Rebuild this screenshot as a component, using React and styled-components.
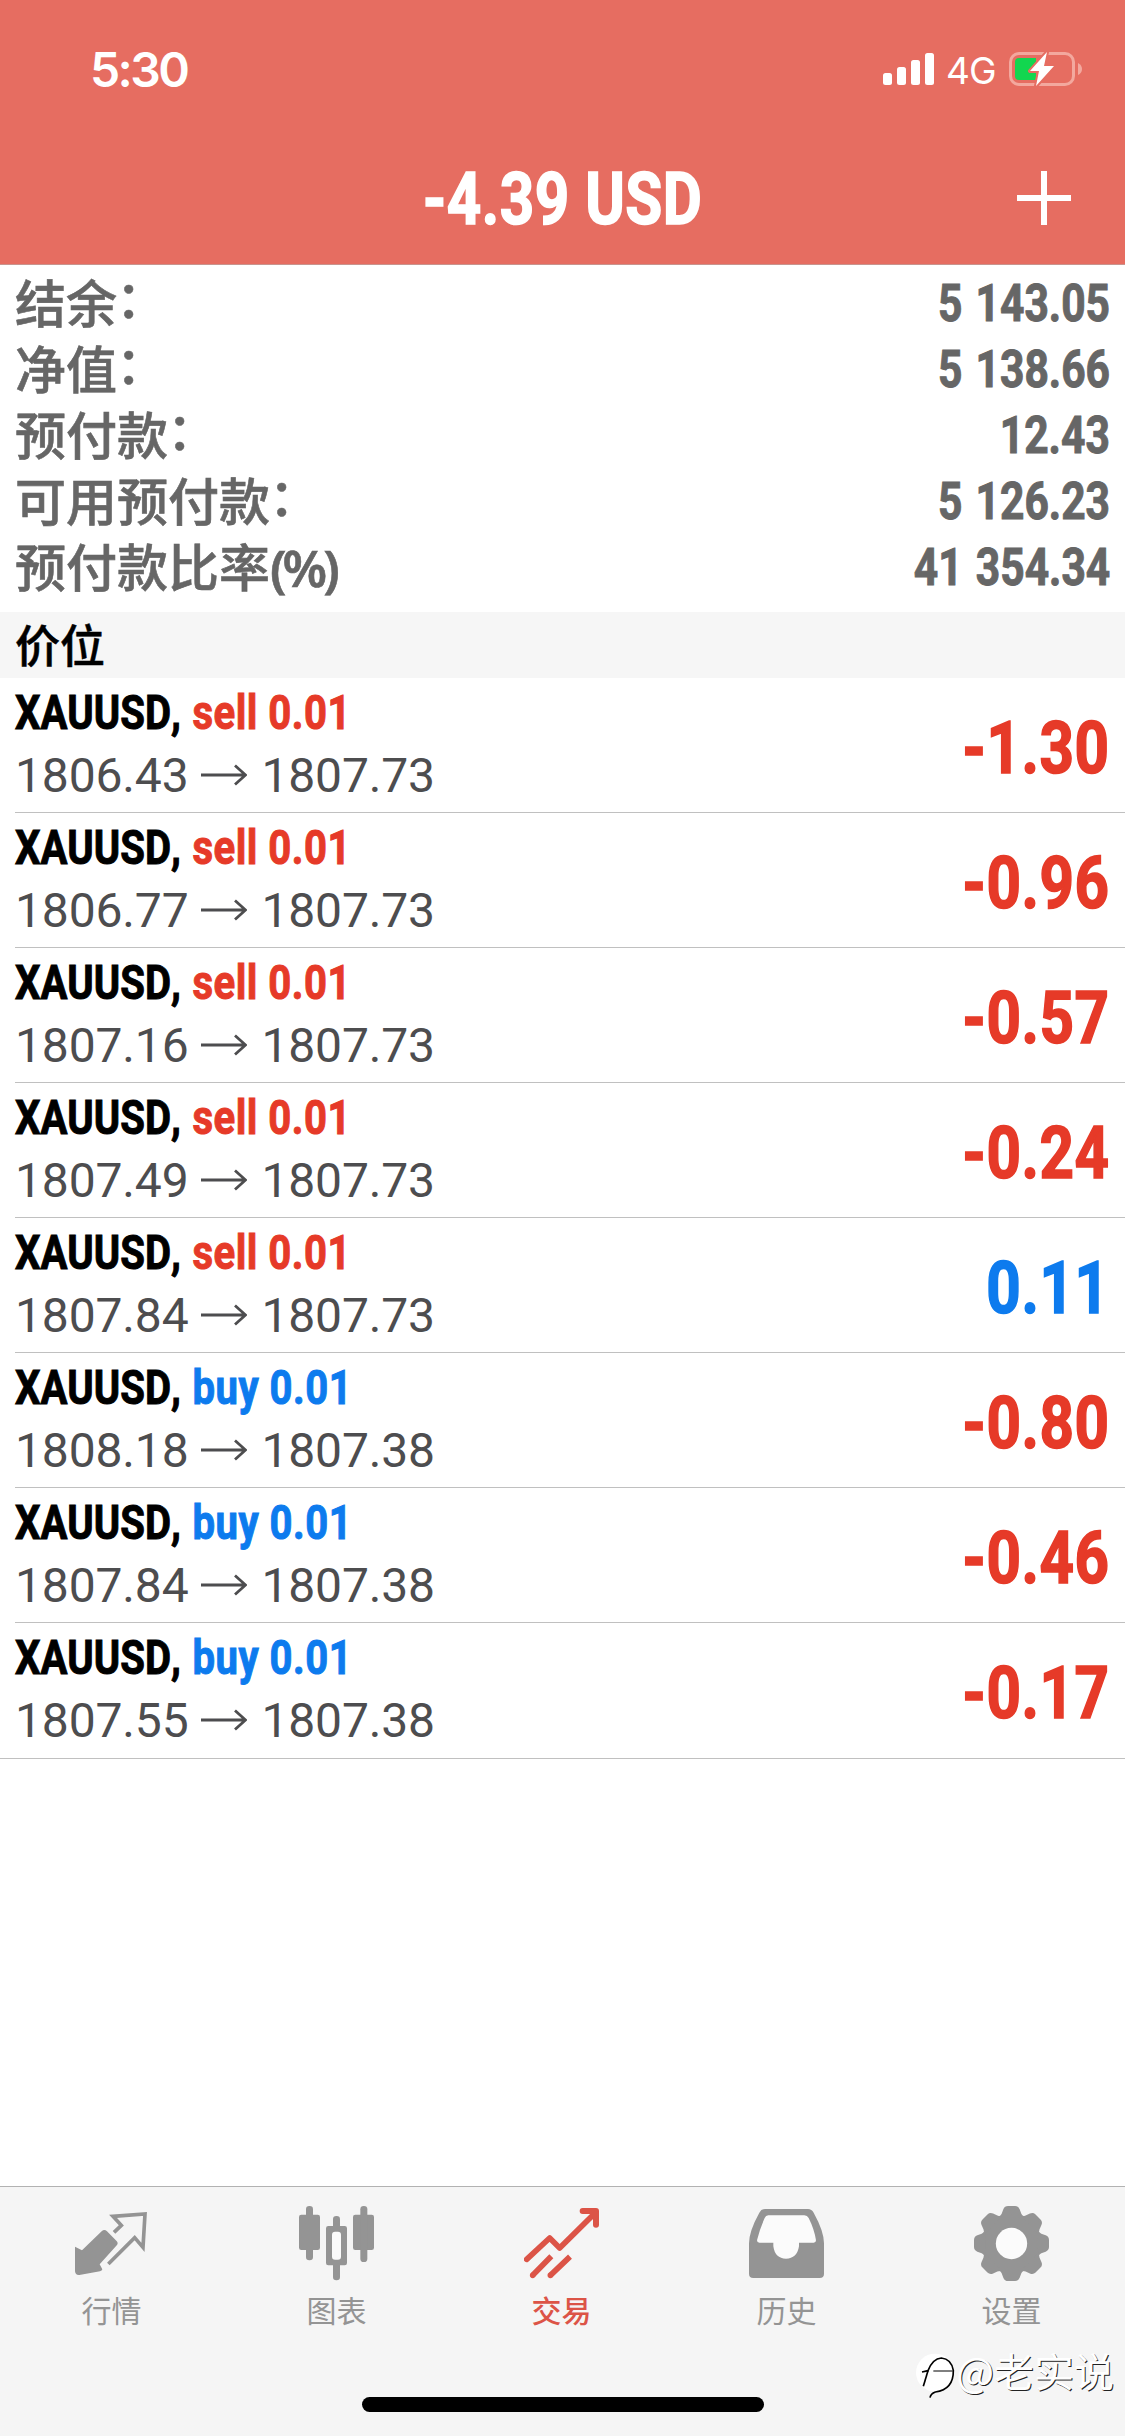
import React from 'react';
import styled, { createGlobalStyle } from 'styled-components'

const red = '#e63a28'
const blue = '#0d7bee'
const cjk = `'Noto Sans CJK SC', sans-serif`

const account = [
    { label: '结余', colon: true, value: '5 143.05' },
    { label: '净值', colon: true, value: '5 138.66' },
    { label: '预付款', colon: true, value: '12.43' },
    { label: '可用预付款', colon: true, value: '5 126.23' },
    { label: '预付款比率', unit: '(%)', value: '41 354.34' },
]

const positions = [
    { id: 1, side: 'sell', open: '1806.43', current: '1807.73', profit: '-1.30' },
    { id: 2, side: 'sell', open: '1806.77', current: '1807.73', profit: '-0.96' },
    { id: 3, side: 'sell', open: '1807.16', current: '1807.73', profit: '-0.57' },
    { id: 4, side: 'sell', open: '1807.49', current: '1807.73', profit: '-0.24' },
    { id: 5, side: 'sell', open: '1807.84', current: '1807.73', profit: '0.11' },
    { id: 6, side: 'buy', open: '1808.18', current: '1807.38', profit: '-0.80' },
    { id: 7, side: 'buy', open: '1807.84', current: '1807.38', profit: '-0.46' },
    { id: 8, side: 'buy', open: '1807.55', current: '1807.38', profit: '-0.17' },
]

const QuotesIcon = () => (
    <svg width="75" height="75" viewBox="0 0 225 225" fill="currentColor">
        <path d="M3 122 L24 133 L83 76 Q91 68 99 76 L127 104 Q135 112 127 119 L77 175 L85 190 Q84 195 78 196 L16 207 Q4 208 3 196 Z" />
        <path d="M120 79 L142 58 L117 31 L213 24 L207 124 L182 95 L103 174" fill="none" stroke="currentColor" strokeWidth="11" />
    </svg>
)

const ChartIcon = () => (
    <svg width="75" height="75" viewBox="0 0 225 225" fill="currentColor">
        <rect x="0" y="26" width="63" height="106" rx="7" />
        <rect x="21" y="0" width="21" height="163" rx="10" />
        <rect x="162" y="26" width="63" height="106" rx="7" />
        <rect x="184" y="0" width="21" height="168" rx="10" />
        <rect x="102" y="30" width="21" height="193" rx="10" />
        <rect x="81" y="60" width="63" height="118" rx="7" />
        <rect x="99" y="77" width="27" height="84" rx="9" fill="#fbfbfb" />
    </svg>
)

const TradeIcon = () => (
    <svg width="75" height="75" viewBox="0 0 225 225" fill="none" stroke="currentColor" strokeWidth="17" strokeLinejoin="round">
        <path d="M8 160 L77 96 L107 126 L214 20" strokeLinecap="round" />
        <path d="M176 15 H216 V56" strokeWidth="18" strokeLinecap="round" />
        <path d="M26 208 L82 151 M79 208 L138 152" />
        <path d="M26 208 h.1 M79 208 h.1" strokeLinecap="round" />
    </svg>
)

const HistoryIcon = () => (
    <svg width="75" height="75" viewBox="0 0 225 225" fill="currentColor">
        <path d="M48 9 H177 Q188 9 194 20 Q225 76 225 112 V203 Q225 216 212 216 H13 Q0 216 0 203 V112 Q0 76 31 20 Q37 9 48 9 Z" />
        <path d="M58 28 H166 Q175 28 179 36 Q196 70 201 103 Q201 110 194 110 H150 V121 Q144 158 111 158 Q78 158 73 121 V110 H31 Q24 110 24 103 Q32 70 47 36 Q50 28 58 28 Z" fill="#fbfbfb" />
    </svg>
)

const SettingsIcon = () => (
    <svg width="75" height="75" viewBox="0 0 225 225" fill="currentColor">
        <circle cx="112.5" cy="112.5" r="90" />
        {[0, 45, 90, 135, 180, 225, 270, 315].map(angle => (
            <path
                key={angle}
                d="M72 35 Q80 30 83 23 L88 10 Q92 0 102 0 H123 Q133 0 137 10 L142 23 Q145 30 153 35 Z"
                transform={`rotate(${angle} 112.5 112.5)`}
            />
        ))}
        <circle cx="112.5" cy="112.5" r="47" fill="#fbfbfb" />
    </svg>
)

const tabs = [
    { name: '行情', Icon: QuotesIcon },
    { name: '图表', Icon: ChartIcon },
    { name: '交易', Icon: TradeIcon, active: true },
    { name: '历史', Icon: HistoryIcon },
    { name: '设置', Icon: SettingsIcon },
]

const Signal = () => (
    <svg width="51" height="32" viewBox="0 0 51 32" fill="#fff">
        <rect x="0" y="20" width="9" height="12" rx="2.5" />
        <rect x="14" y="14" width="9" height="18" rx="2.5" />
        <rect x="28" y="7" width="9" height="25" rx="2.5" />
        <rect x="42" y="0" width="9" height="32" rx="2.5" />
    </svg>
)

const Battery = () => (
    <svg width="74" height="36" viewBox="0 0 74 36">
        <rect x="1.5" y="2.5" width="63" height="31" rx="8.5" fill="none" stroke="#f3a89e" strokeWidth="3" />
        <path d="M69 12 Q73 14 73 18 Q73 22 69 24 Z" fill="#f3a89e" />
        <path d="M10 7 H27 V29 H10 Q6 29 6 25 V11 Q6 7 10 7 Z" fill="#12d64f" />
        <path d="M38 1 L21 20 H30 L27 35 L45 15 H35 Z" fill="#fff" stroke="#e66d61" strokeWidth="4" paintOrder="stroke" strokeLinejoin="round" />
    </svg>
)

const Arrow = () => (
    <svg width="46" height="22" viewBox="0 0 46 22" fill="none" stroke="#4d4d4f" strokeWidth="2.8">
        <path d="M0 11 H44 M34 1.5 L44.5 11 L34 20.5" />
    </svg>
)

const App = () => (
    <Screen>
        <GlobalStyle />
        <Header>
            <StatusBar>
                <Time>5:30</Time>
                <StatusIcons>
                    <Signal />
                    <Network>4G</Network>
                    <Battery />
                </StatusIcons>
            </StatusBar>
            <TitleBar>
                <Title>-4.39 USD</Title>
                <AddButton aria-label="add">
                    <svg width="54" height="54" viewBox="0 0 54 54" stroke="#fff" strokeWidth="6">
                        <path d="M0 27 H54 M27 0 V54" />
                    </svg>
                </AddButton>
            </TitleBar>
        </Header>
        <Account>
            {account.map(row => (
                <AccountRow key={row.label}>
                    <AccountLabel>
                        {row.label}
                        {row.colon && <Colon>：</Colon>}
                        {row.unit && <Unit>{row.unit}</Unit>}
                    </AccountLabel>
                    <AccountValue>{row.value}</AccountValue>
                </AccountRow>
            ))}
        </Account>
        <SectionTitle>价位</SectionTitle>
        <Positions>
            {positions.map(item => (
                <Position key={item.id}>
                    <div>
                        <Symbol>XAUUSD, <Side $side={item.side}>{item.side} 0.01</Side></Symbol>
                        <Prices>
                            <span>{item.open}</span>
                            <Arrow />
                            <span>{item.current}</span>
                        </Prices>
                    </div>
                    <Profit $loss={item.profit.startsWith('-')}>{item.profit}</Profit>
                </Position>
            ))}
        </Positions>
        <TabBar>
            <Tabs>
                {tabs.map(({ name, Icon, active }) => (
                    <Tab key={name} $active={active}>
                        <Icon />
                        <TabName $active={active}>{name}</TabName>
                    </Tab>
                ))}
            </Tabs>
            <HomeIndicator />
        </TabBar>
        <Watermark>
            <svg width="40" height="47" viewBox="50 35 120 141" fill="none" stroke="#000">
                <circle cx="107" cy="97" r="57" fill="#fff" stroke="none" />
                <path d="M92 172 Q94 160 108 155 Q163 148 162 90 Q156 56 126 53 Q100 55 86 91 L68 95" strokeWidth="5" />
                <path d="M86 91 L72 138" strokeWidth="5" />
                <path d="M102 92 H160" strokeWidth="3" />
            </svg>
            <span>@老实说</span>
        </Watermark>
    </Screen>
)

export default App

const GlobalStyle = createGlobalStyle`
    body {
        margin: 0;
        background: #fff;
    }
    * {
        box-sizing: border-box;
    }
    svg {
        display: block;
        flex: none;
    }
`

const Screen = styled.div`
    position: relative;
    display: flex;
    flex-direction: column;
    width: 1125px;
    height: 2436px;
    overflow: hidden;
    background: #fff;
    font-family: Roboto, ${cjk};
`

const Header = styled.header`
    height: 265px;
    background: #e66d61;
    border-bottom: 1px solid #c9948e;
    color: #fff;
`

const StatusBar = styled.div`
    display: flex;
    justify-content: space-between;
    height: 132px;
    padding: 0 42px 0 90px;
`

const Time = styled.div`
    padding-top: 40px;
    font: 600 48px/60px Inter, sans-serif;
    letter-spacing: -2.6px;
`

const StatusIcons = styled.div`
    display: flex;
    align-items: center;
    height: 36px;
    margin-top: 51px;
`

const Network = styled.span`
    width: 50px;
    padding-top: 3px;
    margin: 0 13px 0 12px;
    font: 400 37px/36px Inter, sans-serif;
    letter-spacing: -0.8px;
`

const TitleBar = styled.div`
    display: grid;
    grid-template-columns: 1fr auto 1fr;
    align-items: center;
    height: 132px;
    padding-right: 54px;
`

// the narrow bold face is the regular bold squeezed horizontally
const Condensed = styled.span`
    display: block;
    white-space: pre;
    font-weight: 700;
    font-kerning: none;
    transform: scaleX(0.835);
    -webkit-text-stroke: 1px currentColor;
`

const Title = styled(Condensed)`
    grid-column: 2;
    margin-left: 54px;
    padding-top: 3px;
    font-size: 72px;
    line-height: 80px;
    letter-spacing: 0.6px;
    -webkit-text-stroke-width: 1.6px;
`

const AddButton = styled.button`
    justify-self: end;
    padding: 0;
    border: none;
    background: transparent;
`

const Account = styled.section`
    padding: 5px 15px 12px;
    color: #666;
`

const AccountRow = styled.div`
    display: flex;
    justify-content: space-between;
    height: 66px;
`

const AccountLabel = styled.span`
    margin-top: -2px;
    font: 500 51px/66px ${cjk};
    -webkit-text-stroke: 0.6px currentColor;
`

const Colon = styled.span`
    position: relative;
    top: -5px;
    left: -1px;
`

const Unit = styled.span`
    font-family: 'Noto Sans', sans-serif;
    font-weight: 600;
    letter-spacing: -4px;
`

const AccountValue = styled(Condensed)`
    font-size: 51px;
    line-height: 68px;
    word-spacing: 3px;
    transform-origin: right;
`

const SectionTitle = styled.h2`
    height: 66px;
    margin: 0;
    padding-left: 15px;
    background: #f6f6f6;
    color: #000;
    font: 500 45px/64px ${cjk};
    -webkit-text-stroke: 0.5px currentColor;
`

const Positions = styled.div`
    border-bottom: 1px solid #c0c0c0;
`

const Position = styled.div`
    display: flex;
    justify-content: space-between;
    height: 135px;
    margin-left: 15px;
    padding-right: 15px;
    border-bottom: 1px solid #c0c0c0;
    &:last-child {
        border-bottom: none;
    }
`

const Symbol = styled(Condensed)`
    height: 65px;
    padding-top: 5px;
    color: #000;
    font-size: 48px;
    line-height: 60px;
    transform-origin: left;
`

const Side = styled.span`
    margin-left: 2px;
    color: ${props => props.$side === 'sell' ? red : blue};
    letter-spacing: 0.6px;
`

const Prices = styled.div`
    display: flex;
    align-items: center;
    height: 64px;
    color: #4d4d4f;
    font-size: 48px;
    line-height: 64px;
    span {
        padding-top: 1px;
        letter-spacing: -0.15px;
    }
    svg {
        margin: 0 14px 0 13px;
    }
`

const Profit = styled(Condensed)`
    color: ${props => props.$loss ? red : blue};
    font-size: 72px;
    line-height: 142px;
    letter-spacing: 0.7px;
    transform-origin: right;
    -webkit-text-stroke-width: 1.6px;
`

const TabBar = styled.footer`
    display: flex;
    flex-direction: column;
    align-items: center;
    height: 250px;
    margin-top: auto;
    border-top: 1px solid #b2b2b2;
    background: #f5f5f5;
`

const Tabs = styled.nav`
    display: grid;
    grid-template-columns: repeat(5, 1fr);
    width: 100%;
    height: 210px;
`

const Tab = styled.div`
    display: flex;
    flex-direction: column;
    align-items: center;
    padding: 19px 2px 0 0;
    color: ${props => props.$active ? '#dc5447' : '#949494'};
`

const TabName = styled.span`
    margin-top: 8px;
    font: ${props => props.$active ? 500 : 400} 30px/40px ${cjk};
`

const HomeIndicator = styled.div`
    width: 402px;
    height: 15px;
    border-radius: 8px;
    background: #000;
`

const Watermark = styled.div`
    position: absolute;
    top: 2352px;
    right: 11px;
    display: flex;
    align-items: center;
    height: 47px;
    color: #fff;
    font: 400 40px/46px ${cjk};
    text-shadow: 1px 1px 0 #222;
    span {
        margin-top: -12px;
    }
`
